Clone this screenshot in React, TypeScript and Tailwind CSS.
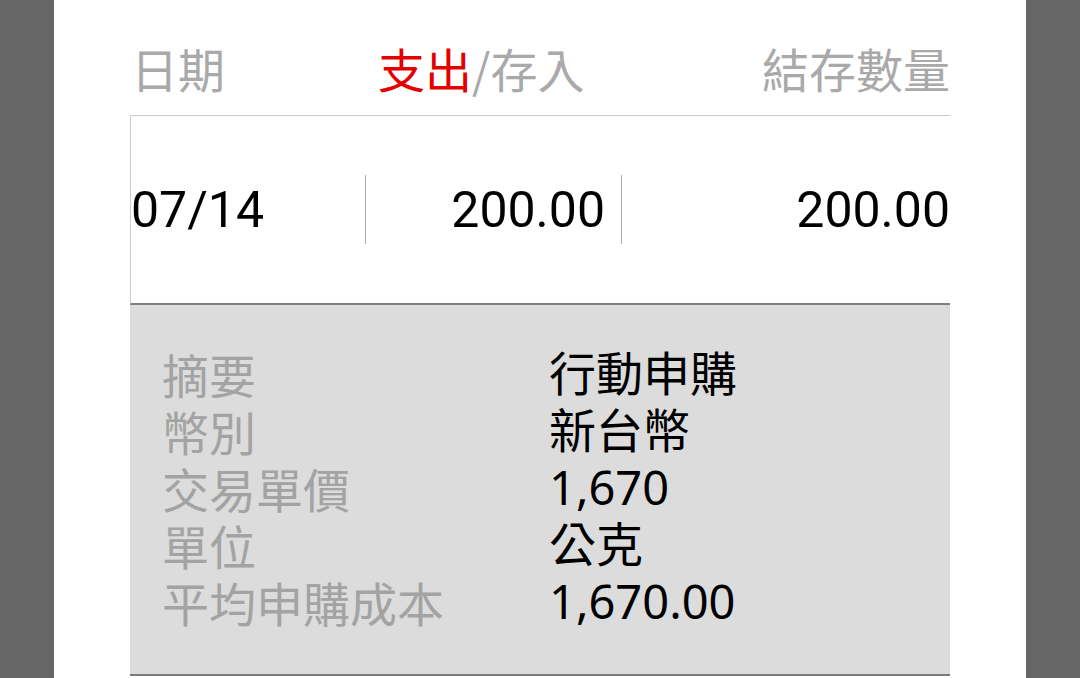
const font = { fontFamily: 'Roboto, "Noto Sans CJK TC", sans-serif' };
const cjk = { fontFamily: '"Noto Sans CJK TC", sans-serif' };
const valueFont = { fontFamily: '"Noto Sans", "Noto Sans CJK TC", sans-serif' };

const details: [string, string][] = [
  ["摘要", "行動申購"],
  ["幣別", "新台幣"],
  ["交易單價", "1,670"],
  ["單位", "公克"],
  ["平均申購成本", "1,670.00"],
];

export default function App() {
  return (
    <div className="flex h-[678px] w-[1080px] overflow-hidden" style={font}>
      <div className="w-[54px] shrink-0 bg-[#666666]" />
      <div className="flex flex-1 flex-col bg-white px-[76px]">
        {/* header */}
        <div className="flex h-[115px] pt-[44px] text-[47px] leading-[47px] text-[#a9a9a9]" style={cjk}>
          <div className="w-[248px] pl-[1px]">日期</div>
          <div>
            <span className="text-[#e50000]">支出</span>/存入
          </div>
          <div className="ml-auto">結存數量</div>
        </div>

        {/* transaction row */}
        <div className="flex h-[190px] items-center border-t border-l border-b-2 border-t-[#cccccc] border-l-[#cccccc] border-b-[#808080] text-[50px] leading-none text-black">
          <div className="w-[234px]">07/14</div>
          <div className="h-[69px] w-px bg-[#aaaaaa]" />
          <div className="w-[255px] pr-[16px] text-right">200.00</div>
          <div className="h-[69px] w-px bg-[#aaaaaa]" />
          <div className="flex-1 text-right">200.00</div>
        </div>

        {/* detail panel */}
        <div className="h-[371px] border-b-2 border-[#7a7a7a] bg-[#dcdcdc] pl-[32px] pt-[40px] text-[47px] leading-[57px]" style={cjk}>
          {details.map(([label, value]) => (
            <div key={label} className="flex">
              <div className="w-[387px] text-[#a3a3a3]">{label}</div>
              <div className="text-black" style={valueFont}>{value}</div>
            </div>
          ))}
        </div>
      </div>
      <div className="w-[54px] shrink-0 bg-[#666666]" />
    </div>
  );
}
